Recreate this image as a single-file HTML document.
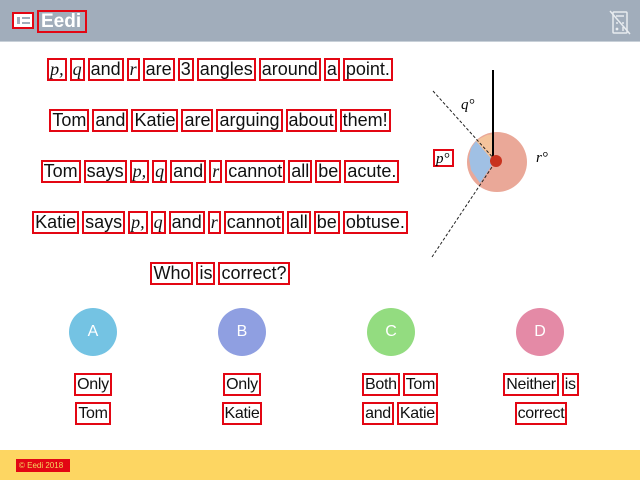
<!DOCTYPE html>
<html><head><meta charset="utf-8"><style>
*{margin:0;padding:0;box-sizing:border-box}
body{width:640px;height:480px;position:relative;background:#fff;font-family:"Liberation Sans",sans-serif;overflow:hidden;color:#111}
.hd{position:absolute;left:0;top:0;width:640px;height:42px;background:#a1adbb;border-bottom:1px solid #c8d0d8}
.ft{position:absolute;left:0;top:450px;width:640px;height:30px;background:#fdd662}
.b{display:inline-block;border:2px solid #e30613;line-height:19px;padding:0 1px;margin:0 1.5px;vertical-align:middle}
.ln{position:absolute;left:0;width:440px;text-align:center;font-size:18px;white-space:nowrap}
.m{font-family:"Liberation Serif",serif;font-style:italic}
.c{position:absolute;width:48px;height:48px;border-radius:50%;color:#fff;font-size:16px;text-align:center;line-height:48px}
.lab{position:absolute;width:120px;text-align:center;font-size:16px;letter-spacing:-0.3px}
</style></head><body>
<div class="hd">
 <div style="position:absolute;left:12px;top:12px;width:22px;height:17px;border:2px solid #e30613;background:#fff">
  <div style="position:absolute;left:3px;top:3px;width:3px;height:7px;background:#a1adbb"></div>
  <div style="position:absolute;left:8px;top:3px;width:8px;height:2px;background:#a1adbb"></div>
  <div style="position:absolute;left:8px;top:8px;width:8px;height:2px;background:#a1adbb"></div>
 </div>
 <div style="position:absolute;left:37px;top:10px;width:50px;height:23px;border:2px solid #e30613;color:#fff;font-weight:bold;font-size:19px;line-height:19px;padding-left:2px">Eedi</div>
 <svg style="position:absolute;left:608px;top:10px" width="24" height="26" viewBox="0 0 24 26" fill="none" stroke="#e8ecf0" stroke-width="1.5"><rect x="5" y="2" width="14" height="21" rx="1"/><line x1="8" y1="6" x2="16" y2="6"/><path d="M8 13h2M14 13h2M8 18l2 2M10 18l-2 2M14 18h2M14 20h2"/><line x1="2" y1="1" x2="22" y2="24"/></svg>
</div>

<div class="ln" style="top:58px"><span class="b m">p,</span><span class="b m">q</span><span class="b">and</span><span class="b m">r</span><span class="b">are</span><span class="b">3</span><span class="b">angles</span><span class="b">around</span><span class="b">a</span><span class="b">point.</span></div>
<div class="ln" style="top:109px"><span class="b">Tom</span><span class="b">and</span><span class="b">Katie</span><span class="b">are</span><span class="b">arguing</span><span class="b">about</span><span class="b">them!</span></div>
<div class="ln" style="top:160px"><span class="b">Tom</span><span class="b">says</span><span class="b m">p,</span><span class="b m">q</span><span class="b">and</span><span class="b m">r</span><span class="b">cannot</span><span class="b">all</span><span class="b">be</span><span class="b">acute.</span></div>
<div class="ln" style="top:211px"><span class="b">Katie</span><span class="b">says</span><span class="b m">p,</span><span class="b m">q</span><span class="b">and</span><span class="b m">r</span><span class="b">cannot</span><span class="b">all</span><span class="b">be</span><span class="b">obtuse.</span></div>
<div class="ln" style="top:262px"><span class="b">Who</span><span class="b">is</span><span class="b">correct?</span></div>

<svg style="position:absolute;left:0;top:0" width="640" height="480" viewBox="0 0 640 480">
 <circle cx="497" cy="162" r="30" fill="#eaa898"/>
 <path d="M494 162 L494 134 L487 135 L481 138 L476 141 Z" fill="#f4c49c"/>
 <path d="M494 162 L476 141 L471 148 L469 158 L471 170 L480 183 Z" fill="#a0c0e4"/>
 <line x1="493" y1="70" x2="493" y2="161" stroke="#000" stroke-width="2"/>
 <line x1="433" y1="91" x2="496" y2="161" stroke="#222" stroke-width="1" stroke-dasharray="3,2"/>
 <line x1="432" y1="257" x2="496" y2="161" stroke="#222" stroke-width="1" stroke-dasharray="3,2"/>
 <circle cx="496" cy="161" r="6" fill="#c8321e"/>
 <text x="461" y="109" font-family="Liberation Serif" font-style="italic" font-size="15">q°</text>
 <text x="536" y="162" font-family="Liberation Serif" font-style="italic" font-size="15">r°</text>
 <rect x="434" y="150" width="19" height="16" fill="none" stroke="#e30613" stroke-width="2"/>
 <text x="436" y="163" font-family="Liberation Serif" font-style="italic" font-size="15">p°</text>
</svg>

<div class="c" style="left:69px;top:308px;background:#74c3e3">A</div>
<div class="c" style="left:218px;top:308px;background:#8f9fe1">B</div>
<div class="c" style="left:367px;top:308px;background:#93dc80">C</div>
<div class="c" style="left:516px;top:308px;background:#e48aa6">D</div>

<div class="lab" style="left:33px;top:373px"><span class="b">Only</span><br><span class="b" style="margin-top:6px">Tom</span></div>
<div class="lab" style="left:182px;top:373px"><span class="b">Only</span><br><span class="b" style="margin-top:6px">Katie</span></div>
<div class="lab" style="left:340px;top:373px"><span class="b">Both</span><span class="b">Tom</span><br><span class="b" style="margin-top:6px">and</span><span class="b" style="margin-top:6px">Katie</span></div>
<div class="lab" style="left:481px;top:373px"><span class="b">Neither</span><span class="b">is</span><br><span class="b" style="margin-top:6px">correct</span></div>

<div class="ft"><div style="position:absolute;left:16px;top:9px;width:54px;height:13px;border:2px solid #e30613;background:#e30613;color:#f5d860;font-size:8px;line-height:9px;padding-left:1px;white-space:nowrap;overflow:hidden">© Eedi 2018</div></div>
</body></html>
